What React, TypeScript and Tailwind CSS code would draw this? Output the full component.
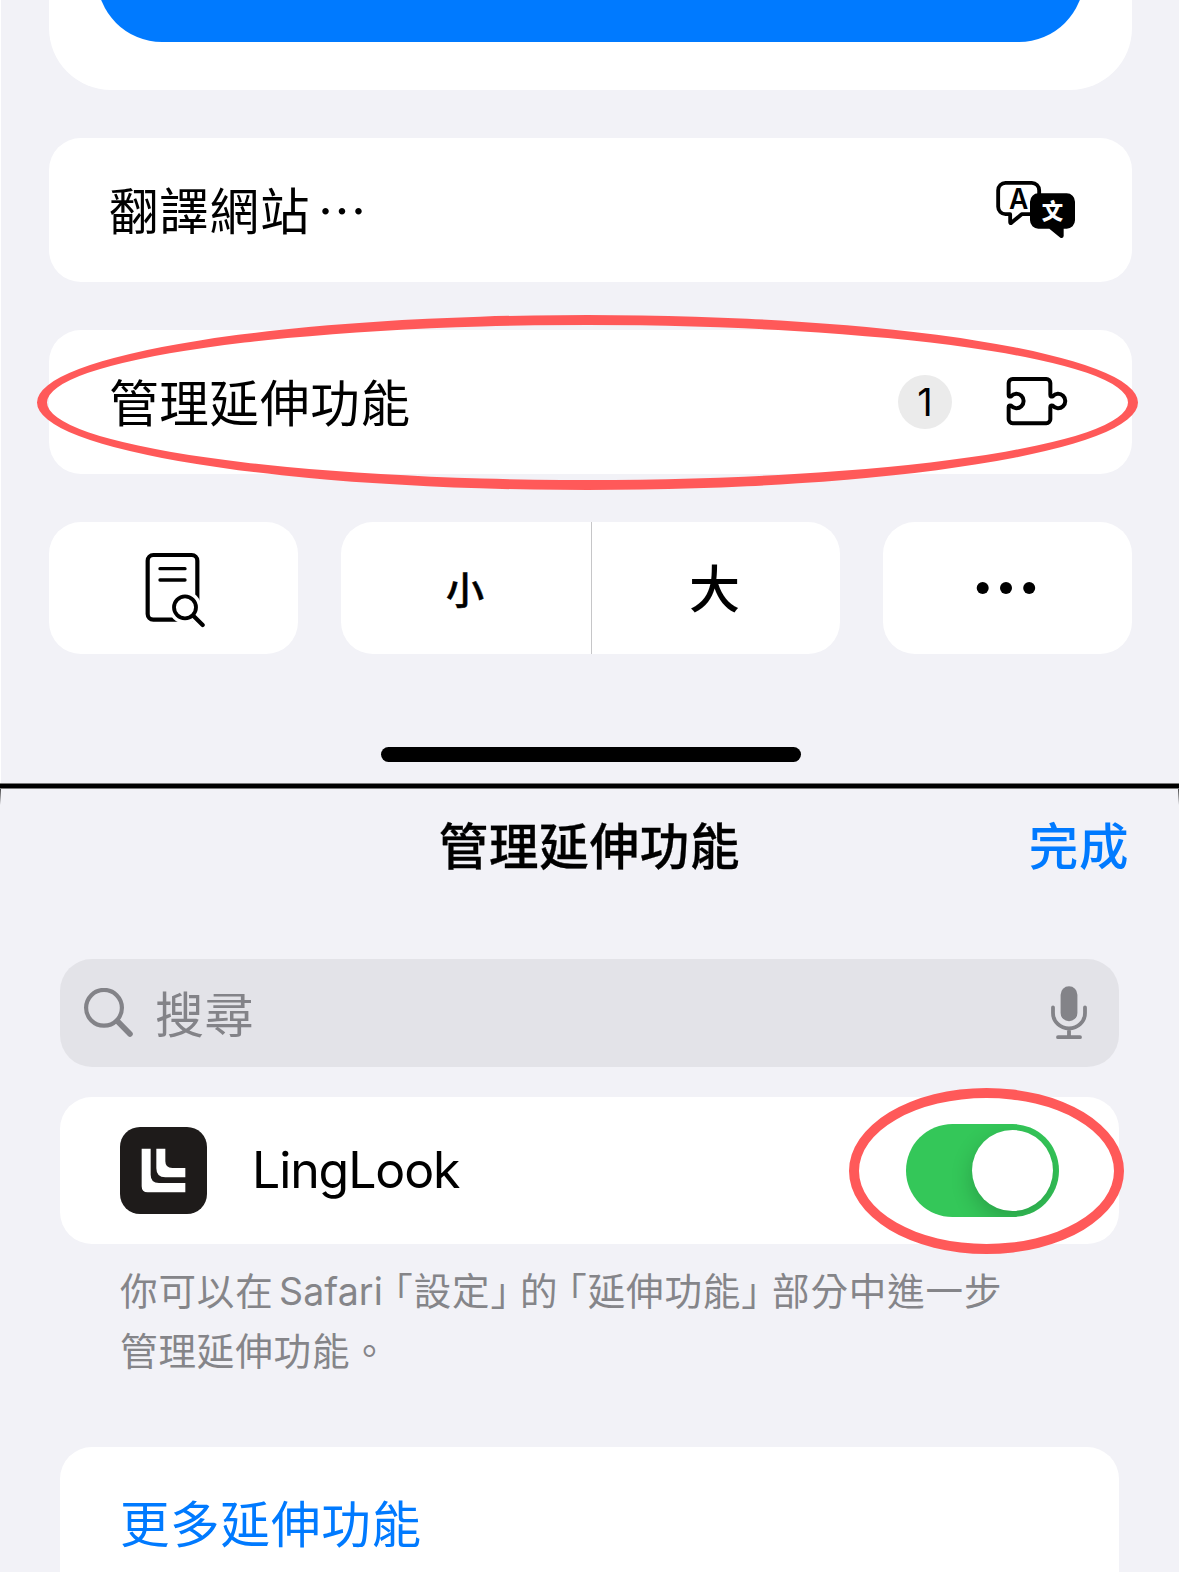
import React from "react";

function TranslateIcon() {
  return (
    <svg width="80" height="60" viewBox="348 540 240 180" fill="none" className="shrink-0">
      <path
        d="M377 548.500H455.500A22 22 0 0 1 477.500 570.500V620.500A22 22 0 0 1 455.500 642.500H425L394 668.500Q390.500 671 390.500 667V642.500H376.500A22 22 0 0 1 354.500 620.500V570.500A22 22 0 0 1 376.500 548.500Z"
        stroke="#000"
        strokeWidth="11.500"
        strokeLinejoin="round"
      />
      <path
        d="M476 580H560A25 25 0 0 1 585 605V661A25 25 0 0 1 560 686H551V708Q550 716 541 713L508 686H475A25 25 0 0 1 450 661V605A25 25 0 0 1 476 580Z"
        fill="#000"
      />
      <text x="387" y="626" fontSize="87" fontWeight="600" textLength="58" lengthAdjust="spacingAndGlyphs" fill="#000" className="font-['Inter',sans-serif]">
        A
      </text>
      <text x="485" y="656" fontSize="64" fontWeight="900" fill="#fff" className="font-['Noto_Sans_CJK_TC',sans-serif]">
        文
      </text>
    </svg>
  );
}

function PuzzleIcon() {
  return (
    <svg width="65" height="52" viewBox="435 225 195 156" fill="none" className="shrink-0">
      <path
        d="M446 284V249A12 12 0 0 1 458 237H559A12 12 0 0 1 571 249V284Q571 292 578 289A21.500 21.500 0 1 1 578 317Q571 314 571 322V357A12 12 0 0 1 559 369.500H458A12 12 0 0 1 446 357V322Q446 314 453 317A21.500 21.500 0 1 0 453 289Q446 292 446 284Z"
        stroke="#000"
        strokeWidth="12"
        strokeLinejoin="round"
      />
    </svg>
  );
}

function FindOnPageIcon() {
  return (
    <svg width="60" height="76" viewBox="436 756 180 228" fill="none" strokeLinecap="round">
      <rect x="444" y="765" width="149" height="194" rx="17" stroke="#000" strokeWidth="12.500" />
      <path d="M481 806H556M481 840H556" stroke="#000" strokeWidth="10" />
      <circle cx="556" cy="922" r="49" fill="#fff" />
      <path d="M556 922L612 975" stroke="#fff" strokeWidth="30" />
      <circle cx="556" cy="922" r="33" fill="#fff" stroke="#000" strokeWidth="11.500" />
      <path d="M581 947L609 975" stroke="#000" strokeWidth="12.500" />
    </svg>
  );
}

function DotsIcon() {
  return (
    <svg width="60" height="14" viewBox="0 0 60 14">
      <circle cx="6.700" cy="7" r="6" />
      <circle cx="30" cy="7" r="6" />
      <circle cx="53.200" cy="7" r="6" />
    </svg>
  );
}

function SearchIcon() {
  return (
    <svg width="50" height="50" viewBox="0 0 50 50" fill="none" stroke="#838388" strokeLinecap="round">
      <circle cx="20" cy="19.800" r="17.900" strokeWidth="4.200" />
      <path d="M33.300 33L46 46" strokeWidth="5.600" />
    </svg>
  );
}

function MicIcon() {
  return (
    <svg width="36" height="54" viewBox="0 0 36 54" fill="none" stroke="#838388" strokeWidth="3.800" strokeLinecap="round">
      <rect x="9.600" y="0.300" width="16.800" height="35" rx="8.400" fill="#838388" stroke="none" />
      <path d="M2 21.500V27A16 15.500 0 0 0 34 27V21.500M18 43V51M7 51.200H29" />
    </svg>
  );
}

function AppIcon() {
  return (
    <svg width="87" height="87" viewBox="240 141 261 261" className="shrink-0">
      <rect x="240" y="141" width="261" height="261" rx="60" fill="#1e1b1a" />
      <path d="M305 206H332V284Q332 309 357 309H436V337H323Q305 337 305 319Z" fill="#fff" />
      <path d="M349 206H376V244Q376 264 397 264H436V292H376Q349 292 349 265Z" fill="#fff" />
    </svg>
  );
}

const row = "flex h-36 items-center rounded-[32px] bg-white pl-[60px]";
const label = "pt-[5px] text-[49.5px] leading-none tracking-[0.8px]";

export default function App() {
  return (
    <div className="flex h-[1572px] w-[1179px] flex-col overflow-hidden bg-[#f2f2f7] font-['Inter','Noto_Sans_CJK_TC',sans-serif] text-black">
      <section className="flex h-[783px] flex-col border-l border-white pr-[47px] pl-12">
        <div className="h-[90px] overflow-hidden rounded-b-[62px] bg-white px-12 pb-12">
          <div className="-mt-[110px] h-[152px] rounded-[65px] bg-[#007aff]" />
        </div>

        <div className={`${row} mt-12 justify-between pr-[56px]`}>
          <span className={label}>
            翻譯網站<span className="ml-[7px]">⋯</span>
          </span>
          <TranslateIcon />
        </div>

        <div className={`${row} relative mt-12 pr-[62px]`}>
          <span className={label}>管理延伸功能</span>
          <span className="mr-[53px] ml-auto flex size-[54px] items-center justify-center rounded-full bg-[#ebebeb] text-[38px] leading-none">
            1
          </span>
          <div className="-mt-0.5">
            <PuzzleIcon />
          </div>
          <div className="absolute -top-[15px] -left-3 h-[175px] w-[1101px] rounded-[50%] border-[10px] border-[#ff5959]" />
        </div>

        <div className="mt-12 flex h-[132px] justify-between">
          <div className="flex w-[249px] items-center justify-center rounded-[32px] bg-white pt-1 pl-[3px]">
            <FindOnPageIcon />
          </div>
          <div className="flex w-[499px] rounded-[32px] bg-white font-medium">
            <div className="flex w-[250px] items-center justify-center pt-[3px] pr-0.5 text-[38px] leading-none [-webkit-text-stroke:0.5px_#000]">
              小
            </div>
            <div className="w-px bg-[#c6c6c8]" />
            <div className="flex flex-1 items-center justify-center pt-[3px] pr-[3px] text-[51px] leading-none">大</div>
          </div>
          <div className="flex w-[249px] items-center justify-center rounded-[32px] bg-white pr-1">
            <DotsIcon />
          </div>
        </div>

        <div className="mx-auto mt-[93px] h-[15px] w-[420px] rounded-full bg-black" />
      </section>

      <div className="h-1.5 shrink-0 border-y border-[#797979] bg-black" />

      <section className="relative flex flex-1 flex-col">
        <div className="absolute top-0 left-0 h-4 w-px bg-linear-to-b from-black/70 to-transparent" />
        <div className="absolute top-0 right-0 h-4 w-px bg-linear-to-b from-black/70 to-transparent" />

        <header className="relative flex h-[170px] items-start justify-center pt-[34px] font-medium">
          <h1 className="text-[49.5px] leading-none tracking-[0.8px] [-webkit-text-stroke:0.3px_#000]">管理延伸功能</h1>
          <button className="absolute top-[34px] right-[50px] text-[49.5px] leading-none tracking-[0.6px] text-[#007aff]">完成</button>
        </header>

        <div className="mx-[60px] flex h-[108px] items-center rounded-[32px] bg-[#e3e3e8] pr-8 pl-6 text-[#838388]">
          <SearchIcon />
          <span className="ml-[21px] pt-[5px] text-[49px] leading-none tracking-[0.6px]">搜尋</span>
          <span className="ml-auto">
            <MicIcon />
          </span>
        </div>

        <div className="relative mx-[60px] mt-[30px] flex h-[147px] items-center rounded-[32px] bg-white pr-[60px] pl-[60px]">
          <AppIcon />
          <span className="ml-[45px] pb-0.5 text-[50px] leading-none tracking-[-1.1px]">LingLook</span>
          <div className="ml-auto flex h-[93px] w-[153px] items-center justify-end overflow-hidden rounded-full bg-[#34c759] pr-1.5">
            <div className="size-[81px] rounded-full bg-white shadow-[0_8px_22px_rgba(0,0,0,0.2)]" />
          </div>
          <div className="absolute -top-[9px] left-[789px] h-[166px] w-[275px] rounded-[50%] border-[10px] border-[#ff5959]" />
        </div>

        <p className="mt-[18px] ml-[120px] text-[37.5px] leading-[60px] tracking-[0.9px] whitespace-nowrap text-[#858589]">
          <span className="inline-block w-[159px]">你可以在</span>
          <span className="inline-block w-[115px] tracking-[0.1px]">Safari</span>
          <span className="inline-block w-[126px] [font-feature-settings:'halt']">「設定」</span>
          <span className="inline-block w-[48px]">的</span>
          <span className="inline-block w-[204px] [font-feature-settings:'halt']">「延伸功能」</span>
          <span>部分中進一步</span>
          <br />
          管理延伸功能。
        </p>

        <div className="mx-[60px] mt-[65px] flex flex-1 items-start rounded-t-[32px] bg-white pt-[54px] pl-[60px]">
          <span className="text-[49.5px] leading-none tracking-[0.8px] text-[#007aff]">更多延伸功能</span>
        </div>
      </section>
    </div>
  );
}
